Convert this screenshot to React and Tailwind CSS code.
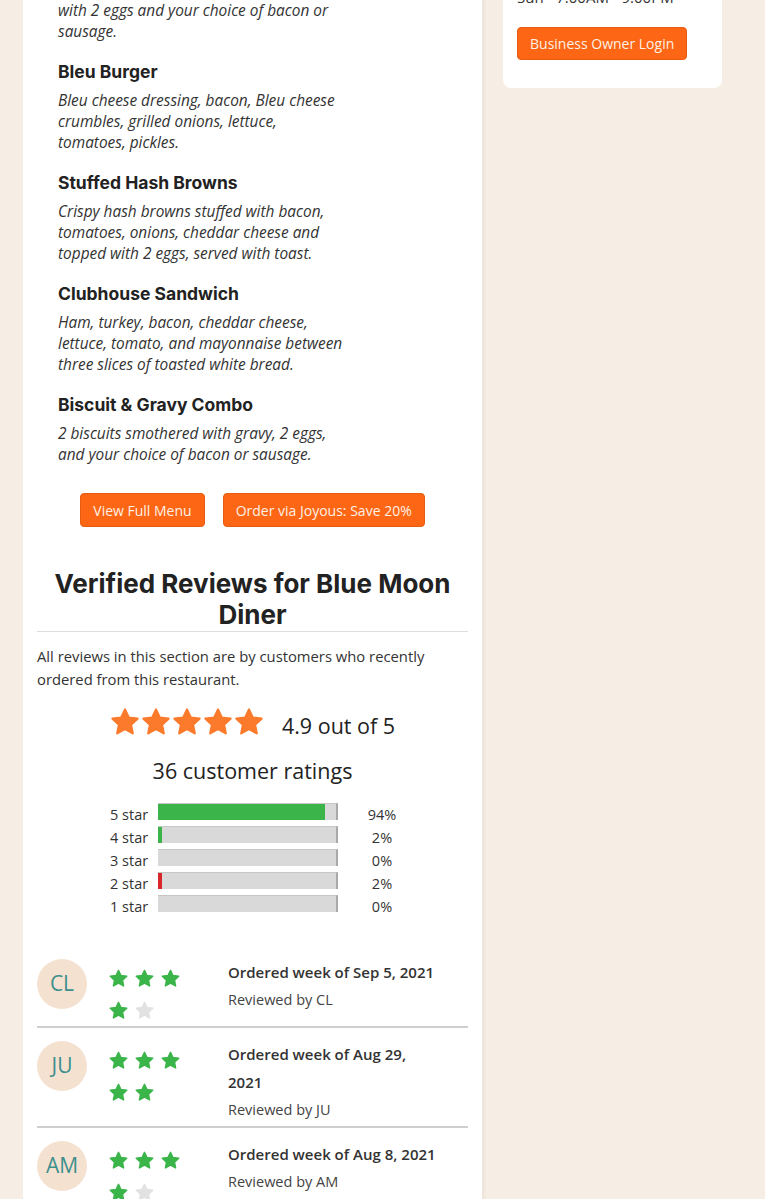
import React from 'react'

const menuItems = [
    {
        name: 'Country Breakfast',
        lines: ['Two buttermilk pancakes or French toast served', 'with 2 eggs and your choice of bacon or', 'sausage.']
    },
    {
        name: 'Bleu Burger',
        description: 'Bleu cheese dressing, bacon, Bleu cheese crumbles, grilled onions, lettuce, tomatoes, pickles.'
    },
    {
        name: 'Stuffed Hash Browns',
        description: 'Crispy hash browns stuffed with bacon, tomatoes, onions, cheddar cheese and topped with 2 eggs, served with toast.'
    },
    {
        name: 'Clubhouse Sandwich',
        description: 'Ham, turkey, bacon, cheddar cheese, lettuce, tomato, and mayonnaise between three slices of toasted white bread.'
    },
    {
        name: 'Biscuit & Gravy Combo',
        description: '2 biscuits smothered with gravy, 2 eggs, and your choice of bacon or sausage.'
    }
]

const ratingRows = [
    { label: '5 star', percent: 94, color: 'bg-[#3bb54a]' },
    { label: '4 star', percent: 2, color: 'bg-[#3bb54a]' },
    { label: '3 star', percent: 0, color: 'bg-[#3bb54a]' },
    { label: '2 star', percent: 2, color: 'bg-[#d9262a]' },
    { label: '1 star', percent: 0, color: 'bg-[#3bb54a]' }
]

const reviews = [
    { initials: 'CL', stars: 4, week: 'Sep 5, 2021' },
    { initials: 'JU', stars: 5, week: 'Aug 29, 2021' },
    { initials: 'AM', stars: 4, week: 'Aug 8, 2021' }
]

function Star({ className }) {
    return (
        <svg viewBox="0 0 24 24" className={className} fill="currentColor" stroke="currentColor" strokeWidth="1.6" strokeLinejoin="round">
            <path d="M12 2.6l2.85 6.05 6.6.8-4.87 4.55 1.27 6.55L12 17.3l-5.85 3.25 1.27-6.55L2.55 9.45l6.6-.8z" />
        </svg>
    )
}

function App() {
    return (
        <div className="h-[1199px] overflow-hidden bg-[#f6ede4] font-['Open_Sans',sans-serif] text-[#333]">
            <div className="flex items-start -mt-[73px] pl-[23px]">
                {/* main column */}
                <div className="w-[459px] bg-white pt-[20px] pb-10 shadow-[2px_0_4px_rgba(0,0,0,0.05)]">
                    <div className="pl-[35px]">
                        {menuItems.map((item) => (
                            <div key={item.name} className="mb-4">
                                <h3 className="font-['Inter',sans-serif] font-bold text-[17.5px] leading-[28px] text-[#222]">
                                    {item.name}
                                </h3>
                                <p className="mt-1 w-[287px] italic text-[15.4px] leading-[21px] text-[#333]">
                                    {item.lines
                                        ? item.lines.map((line) => (
                                            <span key={line} className="block whitespace-nowrap">{line}</span>
                                        ))
                                        : item.description}
                                </p>
                            </div>
                        ))}
                    </div>

                    <div className="flex justify-center gap-[18px] mt-[28px]">
                        <button className="h-[34px] px-3 rounded bg-[#fc6614] border border-[#e85c10] text-[#fef0e4] text-[14px]">
                            View Full Menu
                        </button>
                        <button className="h-[34px] px-3 rounded bg-[#fc6614] border border-[#e85c10] text-[#fef0e4] text-[14px]">
                            Order via Joyous: Save 20%
                        </button>
                    </div>

                    <div className="px-[14px] mt-[41px]">
                        <h2 className="font-['Inter',sans-serif] font-bold text-[26px] leading-[31px] text-center text-[#222] border-b border-[#ddd] pb-px">
                            Verified Reviews for Blue Moon Diner
                        </h2>
                        <p className="mt-[13px] text-[14.8px] leading-[23px] text-[#333]">
                            All reviews in this section are by customers who recently ordered from this restaurant.
                        </p>

                        <div className="flex items-center justify-center mt-[13px] h-[36px]">
                            <div className="flex text-[#fb7a2b]">
                                {[0, 1, 2, 3, 4].map((i) => (
                                    <Star key={i} className="w-[32px] h-[32px] -mx-[0.5px]" />
                                ))}
                            </div>
                            <span className="ml-[17px] mt-[8px] text-[21.5px] text-[#222]">4.9 out of 5</span>
                        </div>

                        <p className="mt-[16px] text-center text-[21.5px] leading-[30px] text-[#222]">36 customer ratings</p>

                        <div className="ml-[73px] mt-[17px]">
                            {ratingRows.map((row) => (
                                <div key={row.label} className="flex items-start h-[23px]">
                                    <span className="w-[48px] text-[14.5px] leading-[23px] text-[#333]">{row.label}</span>
                                    <div className="w-[180px] h-[17px] bg-[#d9d9d9] border-t border-[#c6c6c6] border-r-2 border-r-[#a9a9a9]">
                                        <div
                                            className={`h-full ${row.color}`}
                                            style={{ width: row.percent === 2 ? '4px' : `${row.percent}%` }}
                                        />
                                    </div>
                                    <span className="w-[88px] text-center text-[14.5px] leading-[23px] text-[#333]">{row.percent}%</span>
                                </div>
                            ))}
                        </div>

                        <div className="mt-[40px]">
                            {reviews.map((review) => (
                                <div key={review.initials} className="flex items-start pt-[12px] first:pt-0 border-b-2 border-[#cfcfcf]">
                                    <div className="mt-px w-[50px] h-[50px] rounded-full bg-[#f5e1cf] flex items-center justify-center text-[21px] text-[#3d8f8e]">
                                        {review.initials}
                                    </div>
                                    <div className="ml-[21px] w-[90px] pt-[4px] flex flex-wrap">
                                        {[0, 1, 2, 3, 4].map((i) => (
                                            <div key={i} className="h-[32px] w-[26px] flex items-center">
                                                <Star className={`w-[21px] h-[21px] ${i < review.stars ? 'text-[#3bb54a]' : 'text-[#e2e2e2]'}`} />
                                            </div>
                                        ))}
                                    </div>
                                    <div className="ml-[30px] w-[214px] pb-[2px]">
                                        <p className="text-[15px] leading-[28px] font-semibold text-[#333]">Ordered week of {review.week}</p>
                                        <p className="text-[14.5px] leading-[28px] text-[#444]">Reviewed by {review.initials}</p>
                                    </div>
                                </div>
                            ))}
                        </div>
                    </div>
                </div>

                {/* sidebar */}
                <div className="ml-[21px] w-[219px] bg-white rounded-lg px-[14px] pt-[10px] pb-[28px]">
                    <p className="text-[15px] leading-[24px] text-[#333]">Fri - 7:00AM - 9:00PM</p>
                    <p className="text-[15px] leading-[24px] text-[#333]">Sat - 7:00AM - 9:00PM</p>
                    <p className="text-[15px] leading-[24px] text-[#333]">Sun - 7:00AM - 9:00PM</p>
                    <button className="mt-[18px] h-[33px] px-3 rounded bg-[#fc6614] border border-[#e85c10] text-[#fef0e4] text-[14px]">
                        Business Owner Login
                    </button>
                </div>
            </div>
        </div>
    )
}

export default App
